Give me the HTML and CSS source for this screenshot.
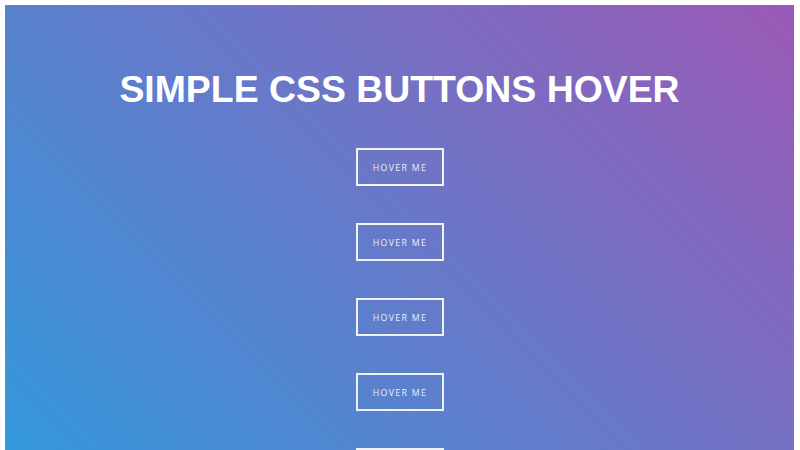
FILE: index.html
```html
<!DOCTYPE html>
<html lang="en">
<head>
<meta charset="utf-8">
<title>Simple CSS Buttons Hover</title>
<link rel="stylesheet" href="styles.css">
</head>
<body>
<main class="stage">
  <h1 class="title">SIMPLE CSS BUTTONS HOVER</h1>
  <div class="buttons">
    <a class="btn" href="#">HOVER ME</a>
    <a class="btn" href="#">HOVER ME</a>
    <a class="btn" href="#">HOVER ME</a>
    <a class="btn" href="#">HOVER ME</a>
    <a class="btn" href="#">HOVER ME</a>
    <a class="btn" href="#">HOVER ME</a>
  </div>
</main>
</body>
</html>
```
FILE: styles.css
```css
html, body {
  margin: 0;
  padding: 0;
  background: #fff;
  overflow: hidden;
}

body {
  padding: 5px 6px 0 5px;
}

.stage {
  height: 445px;
  background: linear-gradient(45deg, #3498db, #9b59b6);
  display: flex;
  flex-direction: column;
  align-items: center;
  font-family: "Open Sans", "Liberation Sans", sans-serif;
}

.title {
  margin: 61px 0 0;
  font-family: "Liberation Sans", Arial, sans-serif;
  font-weight: 700;
  font-size: 37.4px;
  line-height: 46px;
  color: #fff;
}

.buttons {
  margin-top: 36px;
  display: flex;
  flex-direction: column;
  align-items: center;
  gap: 37px;
}

.btn {
  box-sizing: border-box;
  width: 88px;
  height: 38px;
  border: 2px solid rgba(255, 255, 255, 0.9);
  display: flex;
  align-items: center;
  justify-content: center;
  color: rgba(255, 255, 255, 0.9);
  text-decoration: none;
  font-size: 8.8px;
  letter-spacing: 1.3px;
  padding: 2px 0 0 1px;
}
```
